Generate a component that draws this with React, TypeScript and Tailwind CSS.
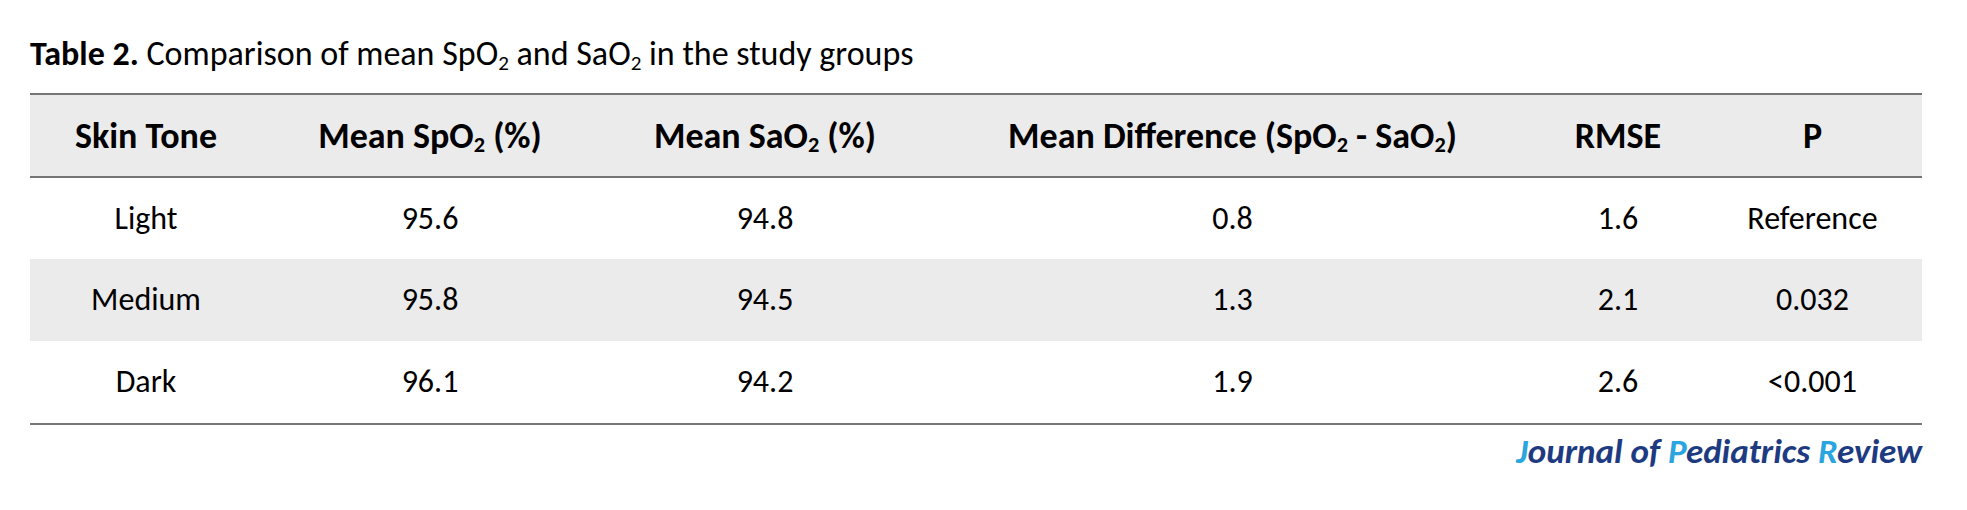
import React from "react";

const font = { fontFamily: 'Carlito, Calibri, Lato, "Liberation Sans", sans-serif' };

function Sub() {
  return <span className="relative top-[0.22em] text-[0.62em] leading-none">2</span>;
}

const cols = "grid grid-cols-[232px_336px_334px_601px_170px_219px]";

const rows = [
  ["Light", "95.6", "94.8", "0.8", "1.6", "Reference"],
  ["Medium", "95.8", "94.5", "1.3", "2.1", "0.032"],
  ["Dark", "96.1", "94.2", "1.9", "2.6", "<0.001"],
];

export default function App() {
  return (
    <div className="w-[1967px] h-[510px] bg-white text-black" style={font}>
      <div className="pl-[30px] pr-[45px] pt-[33px]">
        <div className="text-[34px] leading-[42px] h-[60px] whitespace-nowrap">
          <span className="font-bold">Table 2.</span> Comparison of mean SpO<Sub /> and SaO<Sub /> in the study groups
        </div>
        <div className="border-t-[2px] border-b-[2px] border-[#767676] bg-[#ebebeb]">
          <div className={`${cols} h-[81px] items-center text-center text-[36px] font-bold whitespace-nowrap`}>
            <div>Skin Tone</div>
            <div>Mean SpO<Sub /> (%)</div>
            <div>Mean SaO<Sub /> (%)</div>
            <div>Mean Difference (SpO<Sub /> - SaO<Sub />)</div>
            <div>RMSE</div>
            <div>P</div>
          </div>
        </div>
        <div className="border-b-[2px] border-[#767676]">
          {rows.map((r, i) => (
            <div
              key={i}
              className={`${cols} ${i === 0 ? "h-[81px]" : "h-[82px]"} items-center text-center text-[32px] ${i === 1 ? "bg-[#ebebeb]" : "bg-white"}`}
            >
              {r.map((c, j) => (
                <div key={j}>{c}</div>
              ))}
            </div>
          ))}
        </div>
        <div className="flex justify-end pt-[4px] text-[35px] leading-[44px] font-bold italic text-[#1e3b82] whitespace-nowrap">
          <span>
            <span className="text-[#2aa5e0]">J</span>ournal of <span className="text-[#2aa5e0]">P</span>ediatrics{" "}
            <span className="text-[#2aa5e0]">R</span>eview
          </span>
        </div>
      </div>
    </div>
  );
}
